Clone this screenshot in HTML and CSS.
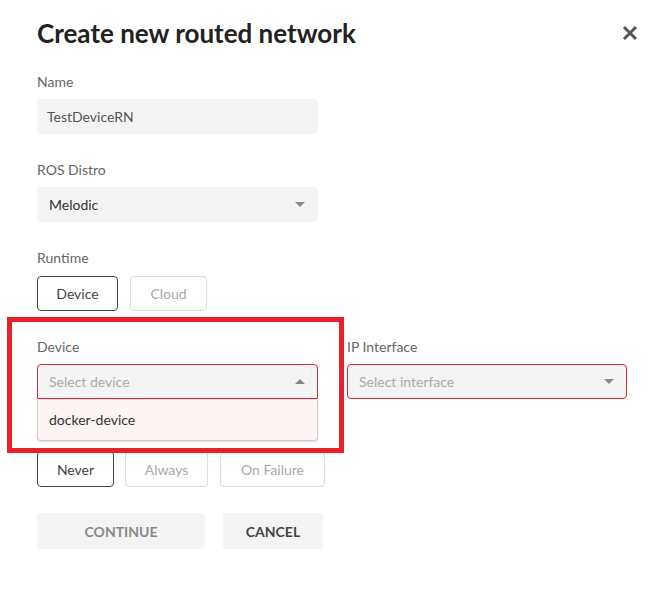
FILE: index.html
```html
<!DOCTYPE html>
<html>
<head>
<meta charset="utf-8">
<link rel="stylesheet" href="styles.css">
</head>
<body>
<div class="modal">
  <div class="header">
    <h1 class="title">Create new routed network</h1>
    <button class="close" aria-label="Close">
      <svg width="16" height="16" viewBox="0 0 16 16"><path d="M2 2 L14 14 M14 2 L2 14" stroke="#555" stroke-width="3" stroke-linecap="butt"/></svg>
    </button>
  </div>

  <div class="field">
    <div class="label">Name</div>
    <div class="input">TestDeviceRN</div>
  </div>

  <div class="field">
    <div class="label">ROS Distro</div>
    <div class="select"><span class="value">Melodic</span><span class="caret down"></span></div>
  </div>

  <div class="field runtime">
    <div class="label">Runtime</div>
    <div class="btn-group">
      <button class="opt active w-device">Device</button>
      <button class="opt w-cloud">Cloud</button>
    </div>
  </div>

  <div class="field row">
    <div class="col">
      <div class="label">Device</div>
      <div class="dd-wrap">
        <div class="select error open"><span class="placeholder">Select device</span><span class="caret up"></span></div>
        <div class="menu"><div class="menu-item">docker-device</div></div>
      </div>
    </div>
    <div class="col col-ip">
      <div class="label">IP Interface</div>
      <div class="select error"><span class="placeholder">Select interface</span><span class="caret down"></span></div>
    </div>
  </div>

  <div class="field restart">
    <div class="label">Restart policy</div>
    <div class="btn-group">
      <button class="opt active w-never">Never</button>
      <button class="opt w-always">Always</button>
      <button class="opt w-fail">On Failure</button>
    </div>
  </div>

  <div class="actions">
    <button class="act act-continue">CONTINUE</button>
    <button class="act act-cancel">CANCEL</button>
  </div>

  <div class="highlight"></div>
</div>
</body>
</html>
```
FILE: styles.css
```css
* { box-sizing: border-box; }
html, body { margin: 0; padding: 0; background: #fff; }
body {
  font-family: Lato, "Open Sans", sans-serif;
  width: 659px;
  height: 592px;
  overflow: hidden;
}
.modal {
  position: relative;
  padding: 17px 22px 0 37px;
}
.header {
  display: flex;
  justify-content: space-between;
  align-items: center;
  height: 32px;
  margin-bottom: 23px;
}
.title {
  margin: 0;
  font-size: 26px;
  font-weight: 700;
  color: #222;
  line-height: 32px;
}
.close {
  border: 0;
  background: none;
  padding: 0;
  width: 16px;
  height: 16px;
  margin-right: -1px;
  display: flex;
}
.field { margin-bottom: 26px; }
.label {
  font-size: 14px;
  line-height: 20px;
  height: 20px;
  color: #666;
  margin-bottom: 7px;
}
.runtime .label { margin-bottom: 8px; }
.input, .select {
  width: 281px;
  height: 35px;
  background: #f4f4f4;
  border-radius: 4px;
  font-size: 14px;
  display: flex;
  align-items: center;
}
.input { padding-left: 10px; color: #555; }
.select { padding: 0 13px 0 12px; justify-content: space-between; color: #333; }
.select.error { border: 1px solid #e0243a; padding-left: 11px; padding-right: 12px; }
.select.open { border-radius: 4px 4px 0 0; }
.placeholder { color: #aaa; }
.caret {
  width: 0; height: 0;
  border-left: 5px solid transparent;
  border-right: 5px solid transparent;
}
.caret.down { border-top: 5px solid #888; }
.caret.up { border-bottom: 5px solid #888; }
.btn-group { display: flex; gap: 12px; }
.opt {
  height: 35px;
  border: 1px solid #ddd;
  background: #fff;
  border-radius: 4px;
  font-family: inherit;
  font-size: 14px;
  color: #aaa;
  padding: 0;
}
.opt.active { border-color: #444; color: #444; }
.w-device { width: 81px; }
.w-cloud { width: 77px; }
.w-never { width: 77px; }
.w-always { width: 83px; margin-left: -1px; }
.w-fail { width: 105px; }
.row { display: flex; gap: 29px; margin-bottom: 25px; }
.restart .opt { height: 36px; }
.col-ip .select { width: 280px; }
.dd-wrap { position: relative; }
.menu {
  position: absolute;
  left: 0;
  top: 35px;
  width: 281px;
  height: 42px;
  background: #fdf4f4;
  border: 1px solid #ccc;
  border-top-color: #e6e0e0;
  border-radius: 0 0 4px 4px;
  box-shadow: 0 1px 2px rgba(0,0,0,0.12);
  z-index: 2;
}
.menu-item {
  padding-left: 11px;
  line-height: 40px;
  font-size: 14px;
  color: #333;
}
.actions { display: flex; gap: 18px; }
.act {
  height: 36px;
  border: 0;
  border-radius: 4px;
  background: #f4f4f4;
  font-family: inherit;
  font-weight: 700;
  font-size: 14px;
  padding: 0;
}
.act-continue { width: 168px; color: #888; }
.act-cancel { width: 100px; color: #444; }
.highlight {
  position: absolute;
  left: 7px;
  top: 317px;
  width: 337px;
  height: 136px;
  border: 5px solid #e8212b;
  z-index: 3;
  pointer-events: none;
}
```
